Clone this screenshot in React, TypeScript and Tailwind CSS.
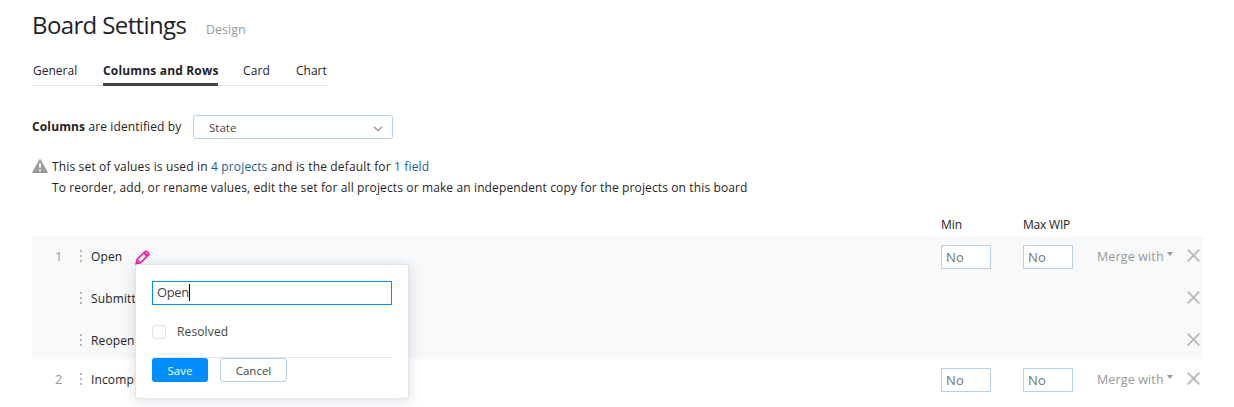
import type { ReactNode } from 'react';

function CloseIcon() {
  return (
    <svg className="block h-[13px] w-[13px]" viewBox="0 0 13 13" fill="none" stroke="#b8b8b8" strokeWidth="1.8">
      <path d="M.7.7l11.6 11.6M12.3.7L.7 12.3" />
    </svg>
  );
}

function GripIcon() {
  return (
    <svg className="block h-3 w-[3px]" viewBox="0 0 3 12" fill="#b8b8b8">
      <path d="M0 0h2v2h-2zM0 5h2v2h-2zM0 10h2v2h-2z" />
    </svg>
  );
}

function PencilIcon() {
  return (
    <svg className="block h-[15px] w-[15px]" viewBox="0 0 15 15" fill="none" stroke="#ff0f9b" strokeWidth="1.5" strokeLinejoin="round">
      <path d="M1 14l1.2-4.6 7.9-7.9a1.2 1.2 0 0 1 1.7 0l1.7 1.7a1.2 1.2 0 0 1 0 1.7l-7.9 7.9z" />
      <path d="M2.3 9.6l3.2 3.2" strokeWidth="1.2" />
      <path d="M9 2.6l3.4 3.4" strokeWidth="2.2" />
      <path d="M.7 14.3l.9-3.2 2.3 2.3z" fill="#ff0f9b" stroke="none" />
    </svg>
  );
}

function WarningIcon() {
  return (
    <svg className="block h-[14px] w-4" viewBox="0 0 16 14">
      <path d="M8 0.5L15.5 13.5H.5z" fill="#999" stroke="#999" strokeWidth="1" strokeLinejoin="round" />
      <path d="M7 4.5h2L8.7 9.3H7.3zM7.1 10.5h1.8v1.8H7.1z" fill="#fff" />
    </svg>
  );
}

function LimitInput() {
  return (
    <div className="h-6 w-[50px] border border-[#b8d1e5] bg-white pl-1 text-[13px] leading-[22px] text-[#737577]">No</div>
  );
}

function Limits() {
  return (
    <>
      <div className="flex gap-8">
        <LimitInput />
        <LimitInput />
      </div>
      <div className="ml-6 flex w-[90px] text-[12.5px] leading-6 text-[#999]">
        <span>Merge with</span>
        <svg className="mt-[7px] ml-[3px] h-1 w-1.5" viewBox="0 0 6 4" fill="#999">
          <path d="M0 0h6L3 4z" />
        </svg>
      </div>
    </>
  );
}

function StateRow({ index, name, edit, limits }: { index?: string; name: string; edit?: ReactNode; limits?: boolean }) {
  return (
    <div className="flex h-6 items-center">
      <div className="w-12 pl-[23px] text-[13px] text-[#999]">{index}</div>
      <div className="-mt-0.5"><GripIcon /></div>
      <div className="ml-2 flex grow items-center">
        <span className="w-8">{name}</span>
        {edit}
      </div>
      {limits && <Limits />}
      <div className="-mt-1 mr-[3px]"><CloseIcon /></div>
    </div>
  );
}

function EditPopup() {
  return (
    <div className="absolute top-[264px] left-[135px] h-[135px] w-[274px] rounded-[3px] border border-[#dfe5eb] bg-white px-4 pt-4 text-[#444] shadow-[0_2px_14px_rgba(0,42,76,0.15)]">
      <div className="flex h-6 items-center border border-[#008eff] pl-1 text-[13px]">
        <span className="tracking-[-0.4px]">Open</span>
        <span className="-mt-0.5 h-[17px] w-px bg-black" />
      </div>
      <div className="mt-[15px] flex h-6 items-center">
        <span className="h-3.5 w-3.5 rounded-[3px] border border-[#dfe5eb]" />
        <span className="ml-[11px]">Resolved</span>
      </div>
      <div className="mt-[13px] flex gap-3 border-t border-[#dfe5eb] text-[11.5px] leading-[25px] tracking-normal">
        <div className="h-6 w-14 rounded-[3px] bg-[#008eff] text-center text-white">Save</div>
        <div className="h-6 w-[67px] rounded-[3px] border border-[#b8d1e5] text-center leading-[23px]">Cancel</div>
      </div>
    </div>
  );
}

export default function App() {
  return (
    <main className="relative h-[407px] w-[1234px] overflow-hidden bg-white pr-[31px] pl-8 font-['Open_Sans',sans-serif] text-[12px] tracking-[0.13px] whitespace-nowrap text-[#1f2326]">
      <header className="flex h-[60px] items-baseline pt-[8px]">
        <h1 className="w-[155px] text-[24px] leading-[34px] font-normal tracking-[-0.62px]">Board Settings</h1>
        <span className="ml-[19px] text-[12.5px] tracking-normal text-[#999]">Design</span>
      </header>
      <nav className="flex h-[26px] w-[296px] border-b border-[#dfe5eb] leading-[22px] tracking-normal">
        <span className="ml-px w-[70px]">General</span>
        <span className="h-[26px] w-[115px] border-b-[3px] border-[#444] font-bold tracking-[0.17px]">Columns and Rows</span>
        <span className="ml-[25px] w-[53px] tracking-[0.13px]">Card</span>
        <span>Chart</span>
      </nav>
      <div className="mt-[29px] flex h-6">
        <div className="w-[161px] leading-[23px]"><b>Columns</b> are identified by</div>
        <div className="flex h-6 w-[200px] items-center justify-between rounded-[3px] border border-[#b8d1e5] pr-[9px] pl-[15px] text-[11.5px] tracking-normal text-[#444]">
          <span className="pt-0.5">State</span>
          <svg className="mt-[3px] h-[6px] w-[10px]" viewBox="0 0 10 6" fill="none" stroke="#999" strokeWidth="1.4">
            <path d="M1 .8l4 4 4-4" />
          </svg>
        </div>
      </div>
      <div className="mt-[17px] flex">
        <div className="mt-[3px]"><WarningIcon /></div>
        <div className="ml-1 leading-[21px]">
          <p className="tracking-[0.155px]">This set of values is used in <a className="text-[#1a5c94]">4 projects</a> and is the default for <a className="text-[#1a5c94]">1 field</a></p>
          <p className="tracking-[0.125px]">To reorder, add, or rename values, edit the set for all projects or make an independent copy for the projects on this board</p>
        </div>
      </div>
      <div className="mt-[17px] flex h-[21px] pl-[909px] leading-[20px] tracking-normal">
        <span className="w-[82px]">Min</span>
        <span className="tracking-[-0.2px]">Max WIP</span>
      </div>
      <section className="flex h-[123px] w-[1171px] flex-col gap-[18px] bg-[#f7f9fa] pt-[9px]">
        <StateRow index="1" name="Open" limits edit={<span className="ml-3"><PencilIcon /></span>} />
        <StateRow name="Submitted" />
        <StateRow name="Reopened" />
      </section>
      <section className="w-[1171px] pt-[9px]">
        <StateRow index="2" name="Incomplete" limits />
      </section>
      <EditPopup />
    </main>
  );
}
